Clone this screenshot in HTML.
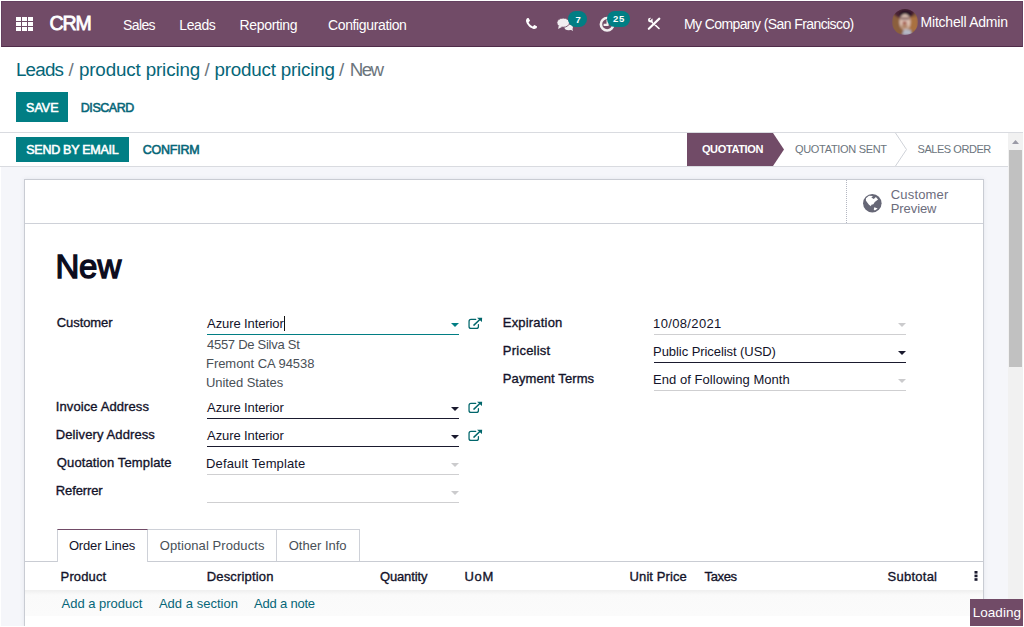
<!DOCTYPE html>
<html><head><meta charset="utf-8"><title>Odoo</title>
<style>
*{box-sizing:border-box;margin:0;padding:0}
html,body{width:1024px;height:627px;overflow:hidden;background:#fff;font-family:"Liberation Sans",sans-serif}
.a{position:absolute}
.t{position:absolute;white-space:pre;line-height:40px;font-family:"Liberation Sans",sans-serif}
.b{font-weight:bold}
</style></head><body>
<div class="a" style="left:1px;top:1px;width:1022px;height:46px;background:#714B67;border:1px solid #654060;border-bottom:1px solid #4f2c49"></div>
<svg class="a" style="left:16px;top:17px" width="17" height="14" viewBox="0 0 17 14" fill="#fff"><rect x="0" y="0" width="5" height="4"/><rect x="6" y="0" width="5" height="4"/><rect x="12" y="0" width="5" height="4"/><rect x="0" y="5" width="5" height="4"/><rect x="6" y="5" width="5" height="4"/><rect x="12" y="5" width="5" height="4"/><rect x="0" y="10" width="5" height="4"/><rect x="6" y="10" width="5" height="4"/><rect x="12" y="10" width="5" height="4"/></svg>
<div class="a" style="left:16px;top:92px;width:52px;height:30px;background:#017e84;"></div>
<div class="a" style="left:0px;top:132px;width:1023px;height:1px;background:#d9dbe0;"></div>
<div class="a" style="left:16px;top:137px;width:113px;height:25px;background:#017e84;"></div>
<div class="a" style="left:0px;top:166px;width:1008px;height:1px;background:#d9dbe0;"></div>
<svg class="a" style="left:680px;top:133px" width="328" height="33" viewBox="0 0 328 33">
<polygon points="7,0 93,0 104,16.5 93,33 7,33" fill="#714B67"/>
<polyline points="215.5,0 226.5,16.5 215.5,33" fill="none" stroke="#d0d3d9" stroke-width="1"/>
</svg>
<div class="a" style="left:1px;top:167px;width:1007px;height:459px;background:#f5f6fa;"></div>
<div class="a" style="left:24px;top:179px;width:960px;height:448px;background:#fff;border:1px solid #c9ccd3;border-bottom:none;box-shadow:0 0 4px rgba(120,125,150,.14)"></div>
<div class="a" style="left:25px;top:223px;width:958px;height:1px;background:#ced1d8;"></div>
<div class="a" style="left:846px;top:180px;width:1px;height:43px;background:transparent;border-left:1px dotted #b4b7c2"></div>
<div class="a" style="left:207px;top:334px;width:252px;height:1px;background:#017e84;"></div>
<div class="a" style="left:207px;top:418px;width:252px;height:1px;background:#1a1a2e;"></div>
<div class="a" style="left:207px;top:446px;width:252px;height:1px;background:#1a1a2e;"></div>
<div class="a" style="left:207px;top:474px;width:252px;height:1px;background:#cfcfd1;"></div>
<div class="a" style="left:207px;top:502px;width:252px;height:1px;background:#cfcfd1;"></div>
<div class="a" style="left:654px;top:334px;width:252px;height:1px;background:#cfcfd1;"></div>
<div class="a" style="left:654px;top:362px;width:252px;height:1px;background:#1a1a2e;"></div>
<div class="a" style="left:654px;top:390px;width:252px;height:1px;background:#cfcfd1;"></div>
<svg class="a" style="left:451.2px;top:323px" width="8" height="4" viewBox="0 0 8 4"><polygon points="0,0 8,0 4,4" fill="#017e84"/></svg>
<svg class="a" style="left:451.2px;top:407px" width="8" height="4" viewBox="0 0 8 4"><polygon points="0,0 8,0 4,4" fill="#1a1a2e"/></svg>
<svg class="a" style="left:451.2px;top:435px" width="8" height="4" viewBox="0 0 8 4"><polygon points="0,0 8,0 4,4" fill="#1a1a2e"/></svg>
<svg class="a" style="left:451.2px;top:463px" width="8" height="4" viewBox="0 0 8 4"><polygon points="0,0 8,0 4,4" fill="#cbcbcd"/></svg>
<svg class="a" style="left:451.2px;top:491px" width="8" height="4" viewBox="0 0 8 4"><polygon points="0,0 8,0 4,4" fill="#cbcbcd"/></svg>
<svg class="a" style="left:898.2px;top:323px" width="8" height="4" viewBox="0 0 8 4"><polygon points="0,0 8,0 4,4" fill="#cbcbcd"/></svg>
<svg class="a" style="left:898.2px;top:351px" width="8" height="4" viewBox="0 0 8 4"><polygon points="0,0 8,0 4,4" fill="#1a1a2e"/></svg>
<svg class="a" style="left:898.2px;top:379px" width="8" height="4" viewBox="0 0 8 4"><polygon points="0,0 8,0 4,4" fill="#cbcbcd"/></svg>
<div class="a" style="left:284px;top:316px;width:1px;height:15px;background:#111;"></div>
<svg class="a" style="left:446px;top:312px" width="40" height="24" viewBox="0 0 1024 614" fill="none" stroke="#01666b">
<path d="M760 190 H640 Q590 190 590 240 V370 Q590 420 640 420 H780 Q830 420 830 370 V320" stroke-width="32" stroke-linecap="round"/>
<path d="M715 335 L860 200" stroke-width="38" stroke-linecap="round"/>
<polygon points="795,150 925,145 920,255" fill="#01666b" stroke="none"/>
</svg>
<svg class="a" style="left:446px;top:396px" width="40" height="24" viewBox="0 0 1024 614" fill="none" stroke="#01666b">
<path d="M760 190 H640 Q590 190 590 240 V370 Q590 420 640 420 H780 Q830 420 830 370 V320" stroke-width="32" stroke-linecap="round"/>
<path d="M715 335 L860 200" stroke-width="38" stroke-linecap="round"/>
<polygon points="795,150 925,145 920,255" fill="#01666b" stroke="none"/>
</svg>
<svg class="a" style="left:446px;top:424px" width="40" height="24" viewBox="0 0 1024 614" fill="none" stroke="#01666b">
<path d="M760 190 H640 Q590 190 590 240 V370 Q590 420 640 420 H780 Q830 420 830 370 V320" stroke-width="32" stroke-linecap="round"/>
<path d="M715 335 L860 200" stroke-width="38" stroke-linecap="round"/>
<polygon points="795,150 925,145 920,255" fill="#01666b" stroke="none"/>
</svg>
<div class="a" style="left:25px;top:561px;width:958px;height:1px;background:#c9ccd3;"></div>
<div class="a" style="left:57px;top:529px;width:91px;height:33px;background:#fff;border:1px solid #ced1d8;border-top:1px solid #714B67;border-bottom:none"></div>
<div class="a" style="left:148px;top:529px;width:129px;height:32px;background:#fff;border:1px solid #ced1d8;border-bottom:none;border-left:none"></div>
<div class="a" style="left:276px;top:529px;width:84px;height:32px;background:#fff;border:1px solid #ced1d8;border-bottom:none"></div>
<div class="a" style="left:25px;top:590px;width:958px;height:26px;background:#fafafa;background:linear-gradient(#efefef,#fafafa 5px,#fbfbfb)"></div>
<svg class="a" style="left:974px;top:571px" width="4" height="10" viewBox="0 0 4 10" fill="#1a1a2e"><rect x="0.5" y="0" width="3" height="2.6"/><rect x="0.5" y="3.6" width="3" height="2.6"/><rect x="0.5" y="7.2" width="3" height="2.6"/></svg>
<div class="a" style="left:1008px;top:133px;width:15px;height:494px;background:#f1f1f1;"></div>
<div class="a" style="left:1009px;top:150px;width:13px;height:217px;background:#c1c1c1;"></div>
<svg class="a" style="left:1012px;top:140px" width="7" height="4" viewBox="0 0 7 4"><polygon points="0,4 7,4 3.5,0" fill="#9a9aa6"/></svg>
<div class="a" style="left:0px;top:626px;width:1024px;height:1px;background:#fff;"></div>
<div class="a" style="left:970px;top:599px;width:53px;height:27px;background:#714B67;"></div>
<svg class="a" style="left:526px;top:18px" width="11" height="11" viewBox="192 128 1408 1408" fill="#fff"><path d="M1600 1240q0 27-10 70.500t-21 68.500q-21 50-122 106-94 51-186 51-27 0-53-3.500t-57.500-12.500-47-14.500-55.500-20.500-49-18q-98-35-175-83-127-79-264-216t-216-264q-48-77-83-175-3-9-18-49t-20.500-55.500-14.500-47-12.500-57.500-3.500-53q0-92 51-186 56-101 106-122 25-11 68.500-21t70.500-10q14 0 21 3 18 6 53 76 11 19 30 54t35 63.500 31 53.500q3 4 17.500 25t21.500 35.500 7 28.500q0 20-28.500 50t-62 55-62 53-28.500 46q0 9 5 22.500t8.500 20.500 14 24 11.500 19q76 137 174 235t235 174q2 1 19 11.500t24 14 20.500 8.500 22.500 5q18 0 46-28.500t53-62 55-62 50-28.500q14 0 28.500 7t35.500 21.500 25 17.500q25 15 53.500 31t63.500 35 54 30q70 35 76 53 3 7 3 21z"/></svg>
<svg class="a" style="left:550px;top:6px" width="90" height="34" viewBox="0 0 1024 387">
<g fill="#f1eef0">
<ellipse cx="212" cy="243" rx="48" ry="33"/><polygon points="225,265 262,285 252,250"/>
<ellipse cx="150" cy="190" rx="72" ry="52" stroke="#714B67" stroke-width="10"/><polygon points="100,218 92,262 140,236"/>
</g>
<circle cx="650" cy="208" r="71" fill="none" stroke="#f1eef0" stroke-width="30"/>
<path d="M655 160 V215 H610" fill="none" stroke="#f1eef0" stroke-width="24"/>
</svg>
<svg class="a" style="left:639px;top:8px" width="30" height="30" viewBox="0 0 627 627" fill="none" stroke="#fff">
<path d="M262 285 L418 428" stroke-width="34" stroke-linecap="round"/>
<circle cx="238" cy="252" r="50" fill="#fff" stroke="none"/>
<circle cx="240" cy="240" r="15" fill="#714B67" stroke="none"/>
<path d="M240 240 L272 206" stroke="#714B67" stroke-width="22"/>
<path d="M316 330 L425 222" stroke="#714B67" stroke-width="70" stroke-linecap="butt"/>
<path d="M205 435 L425 222" stroke-width="44" stroke-linecap="round"/>
</svg>
<svg class="a" style="left:857px;top:188px" width="30" height="30" viewBox="0 0 627 627">
<circle cx="320" cy="318" r="194" fill="#666776"/>
<polygon points="188,215 250,162 335,168 300,200 350,228 395,188 440,240 372,292 342,342 300,352 292,382 250,350 210,300 185,260" fill="#fff"/>
<polygon points="362,400 432,430 372,472 350,450" fill="#fff"/>
</svg>
<svg class="a" style="left:892px;top:9px" width="26" height="26" viewBox="0 0 26 26">
<defs><clipPath id="av"><circle cx="13" cy="13" r="13"/></clipPath><filter id="bl" x="-20%" y="-20%" width="140%" height="140%"><feGaussianBlur stdDeviation="0.9"/></filter></defs>
<g clip-path="url(#av)"><g filter="url(#bl)">
<rect width="26" height="26" fill="#8b5e3c"/>
<ellipse cx="12" cy="3" rx="11" ry="6.5" fill="#4a2434"/>
<rect x="17" y="8" width="9" height="14" fill="#a9713f"/>
<ellipse cx="13.4" cy="5.2" rx="6.2" ry="4" fill="#2a1828"/>
<ellipse cx="13" cy="13" rx="5.6" ry="8" fill="#dcc0b2"/>
<rect x="8.5" y="8.6" width="9" height="1.8" fill="#6a4448"/>
<ellipse cx="12.6" cy="14" rx="2.2" ry="1.8" fill="#a0524a"/>
<ellipse cx="12.6" cy="17.5" rx="3.2" ry="2.2" fill="#b08468"/>
<polygon points="10,26 12,20.5 18.5,20.5 20,26" fill="#b4b8c6"/>
</g></g></svg>

<div class="a" style="left:568px;top:11px;width:19px;height:16px;background:#017e84;border-radius:8px"></div>
<div class="a" style="left:607px;top:10.5px;width:23px;height:16px;background:#017e84;border-radius:8px"></div>
<div class="t" style="left:49.5px;top:3px;font-size:19.5px;letter-spacing:-1.05px;-webkit-text-stroke:0.78px;color:#fff">CRM</div>
<div class="t" style="left:123px;top:5px;font-size:14px;letter-spacing:-0.6px;color:#fff">Sales</div>
<div class="t" style="left:179.3px;top:5px;font-size:14px;letter-spacing:-0.425px;color:#fff">Leads</div>
<div class="t" style="left:239.6px;top:5px;font-size:14px;letter-spacing:-0.338px;color:#fff">Reporting</div>
<div class="t" style="left:328px;top:5px;font-size:14px;letter-spacing:-0.367px;color:#fff">Configuration</div>
<div class="t" style="left:683.9px;top:4px;font-size:14px;letter-spacing:-0.592px;color:#fff">My Company (San Francisco)</div>
<div class="t" style="left:920.6px;top:2px;font-size:14px;letter-spacing:-0.223px;color:#fff">Mitchell Admin</div>
<div class="t" style="left:15.9px;top:50px;font-size:18.8px;letter-spacing:-0.775px;color:#066678">Leads</div>
<div class="t" style="left:68.6px;top:50px;font-size:18.8px;letter-spacing:0px;color:#6c757d">/</div>
<div class="t" style="left:78.9px;top:50px;font-size:18.8px;letter-spacing:-0.136px;color:#066678">product pricing</div>
<div class="t" style="left:204.4px;top:50px;font-size:18.8px;letter-spacing:0px;color:#6c757d">/</div>
<div class="t" style="left:214.5px;top:50px;font-size:18.8px;letter-spacing:-0.2px;color:#066678">product pricing</div>
<div class="t" style="left:338.9px;top:50px;font-size:18.8px;letter-spacing:0px;color:#6c757d">/</div>
<div class="t" style="left:349.7px;top:50px;font-size:18.8px;letter-spacing:-1.6px;color:#6c757d">New</div>
<div class="t" style="left:26.1px;top:88px;font-size:12.5px;letter-spacing:0.0px;-webkit-text-stroke:0.56px;color:#fff">SAVE</div>
<div class="t" style="left:80.8px;top:88px;font-size:12.5px;letter-spacing:-0.45px;-webkit-text-stroke:0.56px;color:#066678">DISCARD</div>
<div class="t" style="left:26.25px;top:130px;font-size:12.5px;letter-spacing:-0.271px;-webkit-text-stroke:0.56px;color:#fff">SEND BY EMAIL</div>
<div class="t" style="left:142.75px;top:130px;font-size:12.5px;letter-spacing:-0.25px;-webkit-text-stroke:0.56px;color:#066678">CONFIRM</div>
<div class="t b" style="left:701.9px;top:129px;font-size:11px;letter-spacing:-0.35px;color:#fff">QUOTATION</div>
<div class="t" style="left:795px;top:129px;font-size:11px;letter-spacing:-0.315px;color:#6c757d">QUOTATION SENT</div>
<div class="t" style="left:917.5px;top:129px;font-size:11px;letter-spacing:-0.45px;color:#6c757d">SALES ORDER</div>
<div class="t" style="left:890.8px;top:175px;font-size:13px;letter-spacing:0.157px;color:#6c6c7c">Customer</div>
<div class="t" style="left:890.8px;top:189px;font-size:13px;letter-spacing:-0.1px;color:#6c6c7c">Preview</div>
<div class="t" style="left:55.4px;top:247px;font-size:33px;letter-spacing:-0.1px;-webkit-text-stroke:1.32px;color:#0c0c1e">New</div>
<div class="t" style="left:56.8px;top:303px;font-size:13px;letter-spacing:-0.086px;-webkit-text-stroke:0.34px;color:#13132a">Customer</div>
<div class="t" style="left:55.8px;top:387px;font-size:13px;letter-spacing:0.1px;-webkit-text-stroke:0.34px;color:#13132a">Invoice Address</div>
<div class="t" style="left:55.8px;top:415px;font-size:13px;letter-spacing:0.1px;-webkit-text-stroke:0.34px;color:#13132a">Delivery Address</div>
<div class="t" style="left:56.8px;top:443px;font-size:13px;letter-spacing:0.129px;-webkit-text-stroke:0.34px;color:#13132a">Quotation Template</div>
<div class="t" style="left:55.8px;top:471px;font-size:13px;letter-spacing:-0.114px;-webkit-text-stroke:0.34px;color:#13132a">Referrer</div>
<div class="t" style="left:207.1px;top:304px;font-size:13px;letter-spacing:-0.108px;color:#13132a">Azure Interior</div>
<div class="t" style="left:207px;top:325px;font-size:13px;letter-spacing:-0.273px;color:#495057">4557 De Silva St</div>
<div class="t" style="left:206px;top:344px;font-size:13px;letter-spacing:-0.047px;color:#495057">Fremont CA 94538</div>
<div class="t" style="left:206px;top:363px;font-size:13px;letter-spacing:-0.067px;color:#495057">United States</div>
<div class="t" style="left:207.1px;top:388px;font-size:13px;letter-spacing:-0.108px;color:#13132a">Azure Interior</div>
<div class="t" style="left:207.1px;top:416px;font-size:13px;letter-spacing:-0.108px;color:#13132a">Azure Interior</div>
<div class="t" style="left:206.1px;top:444px;font-size:13px;letter-spacing:0.127px;color:#13132a">Default Template</div>
<div class="t" style="left:502.8px;top:303px;font-size:13px;letter-spacing:0.189px;-webkit-text-stroke:0.34px;color:#13132a">Expiration</div>
<div class="t" style="left:502.8px;top:331px;font-size:13px;letter-spacing:0.238px;-webkit-text-stroke:0.34px;color:#13132a">Pricelist</div>
<div class="t" style="left:502.8px;top:359px;font-size:13px;letter-spacing:0.1px;-webkit-text-stroke:0.34px;color:#13132a">Payment Terms</div>
<div class="t" style="left:653.1px;top:304px;font-size:13px;letter-spacing:0.344px;color:#13132a">10/08/2021</div>
<div class="t" style="left:653.1px;top:332px;font-size:13px;letter-spacing:-0.067px;color:#13132a">Public Pricelist (USD)</div>
<div class="t" style="left:653.1px;top:360px;font-size:13px;letter-spacing:0.038px;color:#13132a">End of Following Month</div>
<div class="t" style="left:68.9px;top:526px;font-size:13px;letter-spacing:-0.16px;color:#13132a">Order Lines</div>
<div class="t" style="left:159.8px;top:526px;font-size:13px;letter-spacing:0.081px;color:#495057">Optional Products</div>
<div class="t" style="left:288.7px;top:526px;font-size:13px;letter-spacing:0.011px;color:#495057">Other Info</div>
<div class="t" style="left:60.6px;top:557px;font-size:13px;letter-spacing:0.133px;-webkit-text-stroke:0.34px;color:#13132a">Product</div>
<div class="t" style="left:206.7px;top:557px;font-size:13px;letter-spacing:0.17px;-webkit-text-stroke:0.34px;color:#13132a">Description</div>
<div class="t" style="left:379.9px;top:557px;font-size:13px;letter-spacing:-0.114px;-webkit-text-stroke:0.34px;color:#13132a">Quantity</div>
<div class="t" style="left:464.6px;top:557px;font-size:13px;letter-spacing:0.6px;-webkit-text-stroke:0.34px;color:#13132a">UoM</div>
<div class="t" style="left:629.6px;top:557px;font-size:13px;letter-spacing:0.089px;-webkit-text-stroke:0.34px;color:#13132a">Unit Price</div>
<div class="t" style="left:704.6px;top:557px;font-size:13px;letter-spacing:-0.375px;-webkit-text-stroke:0.34px;color:#13132a">Taxes</div>
<div class="t" style="left:887.5px;top:557px;font-size:13px;letter-spacing:0.257px;-webkit-text-stroke:0.34px;color:#13132a">Subtotal</div>
<div class="t" style="left:61.6px;top:584px;font-size:13px;letter-spacing:-0.025px;color:#066678">Add a product</div>
<div class="t" style="left:158.9px;top:584px;font-size:13px;letter-spacing:0.025px;color:#066678">Add a section</div>
<div class="t" style="left:254.1px;top:584px;font-size:13px;letter-spacing:-0.211px;color:#066678">Add a note</div>
<div class="t" style="left:972.7px;top:593px;font-size:13.5px;letter-spacing:0.05px;color:#fff">Loading</div>
<div class="t b" style="left:575.6px;top:0px;font-size:9.5px;letter-spacing:0px;color:#fff">7</div>
<div class="t b" style="left:613.1px;top:-1px;font-size:9.5px;letter-spacing:0.5px;color:#fff">25</div>
</body></html>
